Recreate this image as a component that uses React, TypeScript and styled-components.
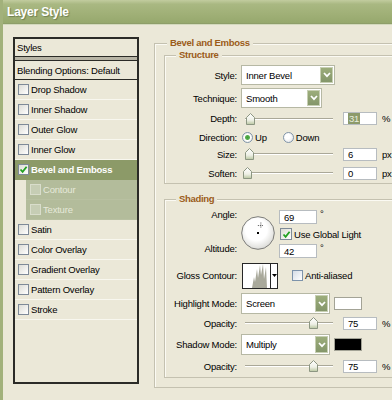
import React from 'react'
import styled, { createGlobalStyle } from 'styled-components'

const BG = '#ebe8d8'

const GlobalStyle = createGlobalStyle`
  html, body {
    margin: 0;
    padding: 0;
    background: ${BG};
  }
  body {
    font-family: 'Liberation Sans', Arial, sans-serif;
    font-size: 9.5px;
    letter-spacing: -0.2px;
    color: #000;
  }
`

type Effect = {
  label: string
  active?: boolean
  sub?: boolean
  checked?: boolean
}

const effects: Effect[] = [
  { label: 'Drop Shadow' },
  { label: 'Inner Shadow' },
  { label: 'Outer Glow' },
  { label: 'Inner Glow' },
  { label: 'Bevel and Emboss', active: true, checked: true },
  { label: 'Contour', sub: true },
  { label: 'Texture', sub: true },
  { label: 'Satin' },
  { label: 'Color Overlay' },
  { label: 'Gradient Overlay' },
  { label: 'Pattern Overlay' },
  { label: 'Stroke' }
]

function Chevron() {
  return (
    <svg width='8' height='6' viewBox='0 0 8 6'>
      <polyline points='1,1 4,4.2 7,1' fill='none' stroke='#fff' strokeWidth='1.7' />
    </svg>
  )
}

function CheckMark() {
  return (
    <svg width='9' height='9' viewBox='0 0 9 9'>
      <polyline points='1.5,4.5 3.6,6.8 7.6,1.8' fill='none' stroke='#21a121' strokeWidth='1.8' />
    </svg>
  )
}

function Select({ value, width }: { value: string; width: number }) {
  return (
    <SelectBox $w={width}>
      <span>{value}</span>
      <SelectButton>
        <Chevron />
      </SelectButton>
    </SelectBox>
  )
}

function Slider({ pos }: { pos: number }) {
  return (
    <SliderBox>
      <SliderTrack />
      <SliderThumb style={{ left: pos - 4 }}>
        <svg width='9' height='12' viewBox='0 0 9 12'>
          <defs>
            <linearGradient id='thumb' x1='0' y1='0' x2='0' y2='1'>
              <stop offset='0' stopColor='#ffffff' />
              <stop offset='0.6' stopColor='#eef0e6' />
              <stop offset='1' stopColor='#b9c7a0' />
            </linearGradient>
          </defs>
          <path d='M0.5 11.5 V4.5 L4.5 0.5 L8.5 4.5 V11.5 Z' fill='url(#thumb)' stroke='#8c9682' />
        </svg>
      </SliderThumb>
    </SliderBox>
  )
}

function Dial() {
  const cx = 17 + 8 * Math.cos((69 * Math.PI) / 180)
  const cy = 17 - 8 * Math.sin((69 * Math.PI) / 180)
  return (
    <DialBox>
      <svg width='34' height='34' viewBox='0 0 34 34'>
        <defs>
          <radialGradient id='dial' cx='0.45' cy='0.4' r='0.6'>
            <stop offset='0.55' stopColor='#ffffff' />
            <stop offset='1' stopColor='#dcdcd8' />
          </radialGradient>
        </defs>
        <circle cx='17' cy='17' r='16.3' fill='url(#dial)' stroke='#7b7b78' />
        <line x1={cx} y1={cy - 3} x2={cx} y2={cy + 3} stroke='#555' strokeDasharray='1 1' />
        <line x1={cx - 3} y1={cy} x2={cx + 3} y2={cy} stroke='#555' strokeDasharray='1 1' />
        <rect x='16' y='16' width='2' height='2' fill='#000' />
      </svg>
    </DialBox>
  )
}

export default function App() {
  return (
    <Window>
      <GlobalStyle />
      <TitleBar>Layer Style</TitleBar>
      <Body>
        <StylesPanel>
          <PanelHeader>Styles</PanelHeader>
          <PanelDivider />
          <BlendingRow>Blending Options: Default</BlendingRow>
          {effects.map(effect => (
            <EffectRow key={effect.label} $active={effect.active} $sub={effect.sub}>
              <Check $size={11} $muted={effect.sub}>
                {effect.checked && <CheckMark />}
              </Check>
              <span>{effect.label}</span>
            </EffectRow>
          ))}
        </StylesPanel>

        <Group>
          <Legend $outer>Bevel and Emboss</Legend>
          <SubGroup>
            <Legend>Structure</Legend>
            <Rows>
              <Row $h={20}>
                <Label>Style:</Label>
                <Gap $w={4} />
                <Select value='Inner Bevel' width={94} />
              </Row>
              <Row $h={20} $mt={3}>
                <Label>Technique:</Label>
                <Gap $w={4} />
                <Select value='Smooth' width={81} />
              </Row>
              <Row $h={21}>
                <Label>Depth:</Label>
                <Gap $w={8} />
                <Slider pos={5} />
                <Gap $w={10} />
                <NumberField $w={34}>
                  <Selected>31</Selected>
                </NumberField>
                <Unit>%</Unit>
              </Row>
              <Row $h={16}>
                <Label>Direction:</Label>
                <Gap $w={5} />
                <Radio $checked />
                <RadioText>Up</RadioText>
                <Gap $w={16} />
                <Radio />
                <RadioText>Down</RadioText>
              </Row>
              <Row $h={18}>
                <Label>Size:</Label>
                <Gap $w={8} />
                <Slider pos={4} />
                <Gap $w={10} />
                <NumberField $w={34}>6</NumberField>
                <Unit>px</Unit>
              </Row>
              <Row $h={20}>
                <Label>Soften:</Label>
                <Gap $w={8} />
                <Slider pos={2} />
                <Gap $w={10} />
                <NumberField $w={34}>0</NumberField>
                <Unit>px</Unit>
              </Row>
            </Rows>
          </SubGroup>

          <SubGroup $mt={9}>
            <Legend>Shading</Legend>
            <Rows $pt={3}>
              <AngleBlock>
                <AngleLabels>
                  <span>Angle:</span>
                  <span>Altitude:</span>
                </AngleLabels>
                <Gap $w={4} />
                <Dial />
                <Gap $w={4} />
                <AngleFields>
                  <FieldLine>
                    <NumberField $w={38} $h={14}>69</NumberField>
                    <Degree>°</Degree>
                  </FieldLine>
                  <FieldLine>
                    <Gap $w={1} />
                    <Check $size={12}>
                      <CheckMark />
                    </Check>
                    <CheckText>Use Global Light</CheckText>
                  </FieldLine>
                  <FieldLine>
                    <NumberField $w={38} $h={14}>42</NumberField>
                    <Degree>°</Degree>
                  </FieldLine>
                </AngleFields>
              </AngleBlock>

              <Row $h={27} $mt={4}>
                <Label>Gloss Contour:</Label>
                <Gap $w={5} />
                <ContourBox>
                  <svg width='26' height='24' viewBox='0 0 26 24'>
                    <path
                      d='M9 24 L11 13 L12 18 L14 5 L15 14 L17 1 L18 11 L20 0 L21 15 L23 3 L24 24 Z'
                      fill='#a9a99b'
                    />
                  </svg>
                  <ContourArrow>
                    <svg width='5' height='3' viewBox='0 0 5 3'>
                      <path d='M0 0 H5 L2.5 3 Z' fill='#000' />
                    </svg>
                  </ContourArrow>
                </ContourBox>
                <Gap $w={14} />
                <Check $size={11} $blue />
                <CheckText>Anti-aliased</CheckText>
              </Row>

              <Row $h={21} $mt={4}>
                <Label>Highlight Mode:</Label>
                <Gap $w={4} />
                <Select value='Screen' width={89} />
                <Gap $w={4} />
                <Swatch $color='#ffffff' />
              </Row>
              <Row $h={18}>
                <Label>Opacity:</Label>
                <Gap $w={8} />
                <Slider pos={68} />
                <Gap $w={10} />
                <NumberField $w={34}>75</NumberField>
                <Unit>%</Unit>
              </Row>
              <Row $h={21} $mt={2}>
                <Label>Shadow Mode:</Label>
                <Gap $w={4} />
                <Select value='Multiply' width={89} />
                <Gap $w={4} />
                <Swatch $color='#000000' />
              </Row>
              <Row $h={22}>
                <Label>Opacity:</Label>
                <Gap $w={8} />
                <Slider pos={68} />
                <Gap $w={10} />
                <NumberField $w={34}>75</NumberField>
                <Unit>%</Unit>
              </Row>
            </Rows>
          </SubGroup>
        </Group>
      </Body>
    </Window>
  )
}

const {
  Window,
  TitleBar,
  Body,
  StylesPanel,
  PanelHeader,
  PanelDivider,
  BlendingRow,
  EffectRow,
  Check,
  Group,
  SubGroup,
  Legend,
  Rows,
  Row,
  Label,
  Gap,
  SelectBox,
  SelectButton,
  SliderBox,
  SliderTrack,
  SliderThumb,
  NumberField,
  Selected,
  Unit,
  Radio,
  RadioText,
  AngleBlock,
  AngleLabels,
  AngleFields,
  FieldLine,
  Degree,
  DialBox,
  CheckText,
  ContourBox,
  ContourArrow,
  Swatch
} = {
  Window: styled.div`
    width: 392px;
    height: 400px;
    overflow: hidden;
    display: flex;
    flex-direction: column;
    background: ${BG};
    border-left: 3px solid #a2b17b;
    box-sizing: border-box;
  `,
  TitleBar: styled.div`
    height: 24px;
    flex-shrink: 0;
    display: flex;
    align-items: center;
    padding-left: 4px;
    padding-top: 1px;
    box-sizing: border-box;
    background: linear-gradient(#c2cc9f 0%, #a9b882 18%, #a0b077 60%, #96a86d 100%);
    border-bottom: 1px solid #8e9e69;
    box-shadow: 0 1px 0 #d3d9bd;
    color: #fff;
    font-size: 12px;
    font-weight: 700;
    letter-spacing: -0.2px;
    text-shadow: 1px 1px 1px #6f7f4f;
  `,
  Body: styled.div`
    flex: 1;
    display: flex;
    align-items: flex-start;
    padding: 13px 0 0 10px;
  `,
  StylesPanel: styled.div`
    width: 126px;
    height: 347px;
    flex-shrink: 0;
    box-sizing: border-box;
    border: 2px solid #2b2b27;
    display: flex;
    flex-direction: column;
  `,
  PanelHeader: styled.div`
    height: 17px;
    display: flex;
    align-items: center;
    padding-left: 2px;
  `,
  PanelDivider: styled.div`
    height: 3px;
    background: #b7b4a5;
    border-top: 1px solid #2b2b27;
    border-bottom: 1px solid #2b2b27;
  `,
  BlendingRow: styled.div`
    height: 18px;
    display: flex;
    align-items: center;
    padding-left: 2px;
    border-bottom: 1px solid #2b2b27;
  `,
  EffectRow: styled.div<{ $active?: boolean; $sub?: boolean }>`
    height: 19px;
    display: flex;
    align-items: center;
    gap: 2px;
    padding-left: ${({ $sub }) => ($sub ? 4 : 3)}px;
    margin-left: ${({ $sub }) => ($sub ? 11 : 0)}px;
    background: ${({ $active, $sub }) => ($active ? '#8c9a68' : $sub ? '#b3bc9b' : 'transparent')};
    color: ${({ $active, $sub }) => ($active ? '#fff' : $sub ? '#e6e9da' : '#000')};
    font-weight: ${({ $active }) => ($active ? 700 : 400)};
    border-bottom: 1px solid ${({ $active, $sub }) => ($active ? '#8c9a68' : $sub ? '#b8c0a1' : '#f8f7ef')};
  `,
  Check: styled.span<{ $size: number; $muted?: boolean; $blue?: boolean }>`
    width: ${({ $size }) => $size}px;
    height: ${({ $size }) => $size}px;
    box-sizing: border-box;
    flex-shrink: 0;
    display: flex;
    align-items: center;
    justify-content: center;
    border: 1px solid ${({ $muted, $blue }) => ($muted ? '#d9ddcb' : $blue ? '#7d93ab' : '#7e8a98')};
    background: ${({ $muted, $blue }) =>
      $muted
        ? 'rgba(255,255,255,0.25)'
        : $blue
        ? 'linear-gradient(135deg, #d5dde6, #ffffff)'
        : 'linear-gradient(135deg, #dcdcd5, #ffffff)'};
  `,
  Group: styled.fieldset`
    margin: 0 -40px 0 15px;
    padding: 0 0 9px 9px;
    flex: 1;
    min-width: 0;
    border: 1px solid #c4c1b0;
    box-shadow: inset 1px 1px 0 #fbfaf3;
  `,
  SubGroup: styled.fieldset<{ $mt?: number }>`
    margin: ${({ $mt }) => $mt || 0}px 0 0 0;
    padding: 0;
    min-width: 0;
    border: 1px solid #c4c1b0;
    box-shadow: inset 1px 1px 0 #fbfaf3;
  `,
  Legend: styled.legend<{ $outer?: boolean }>`
    margin-left: ${({ $outer }) => ($outer ? 3 : 11)}px;
    padding: 0 3px;
    background: ${BG};
    color: #9b5c1a;
    font-weight: 700;
    font-size: 9.5px;
    letter-spacing: -0.3px;
    line-height: 12px;
  `,
  Rows: styled.div<{ $pt?: number }>`
    display: flex;
    flex-direction: column;
    padding-top: ${({ $pt }) => ($pt === undefined ? 4 : $pt)}px;
  `,
  Row: styled.div<{ $h: number; $mt?: number }>`
    height: ${({ $h }) => $h}px;
    margin-top: ${({ $mt }) => $mt || 0}px;
    display: flex;
    align-items: center;
  `,
  Label: styled.span`
    width: 72px;
    flex-shrink: 0;
    text-align: right;
    white-space: nowrap;
  `,
  Gap: styled.span<{ $w: number }>`
    width: ${({ $w }) => $w}px;
    flex-shrink: 0;
  `,
  SelectBox: styled.div<{ $w: number }>`
    width: ${({ $w }) => $w}px;
    height: 100%;
    box-sizing: border-box;
    flex-shrink: 0;
    display: flex;
    align-items: center;
    justify-content: space-between;
    padding: 0 1px 0 4px;
    background: #fff;
    border: 1px solid #b6b8a4;
  `,
  SelectButton: styled.span`
    width: 13px;
    height: calc(100% - 2px);
    box-sizing: border-box;
    display: flex;
    align-items: center;
    justify-content: center;
    background: linear-gradient(#9cad7b, #84966a);
    border: 1px solid #c7cfb3;
  `,
  SliderBox: styled.div`
    position: relative;
    width: 88px;
    height: 12px;
    flex-shrink: 0;
  `,
  SliderTrack: styled.div`
    position: absolute;
    left: 0;
    right: 0;
    top: 5px;
    height: 0;
    border-top: 1px solid #aaa898;
    border-bottom: 1px solid #ffffff;
  `,
  SliderThumb: styled.div`
    position: absolute;
    top: 0;
    width: 9px;
    height: 12px;
    display: flex;
  `,
  NumberField: styled.div<{ $w: number; $h?: number }>`
    width: ${({ $w }) => $w}px;
    height: ${({ $h }) => $h || 13}px;
    box-sizing: border-box;
    flex-shrink: 0;
    display: flex;
    align-items: center;
    padding-left: 4px;
    background: #fff;
    border: 1px solid #b7bcc0;
  `,
  Selected: styled.span`
    background: #8c9a6a;
    color: #e8eedf;
    padding: 0 1px;
    line-height: 11px;
  `,
  Unit: styled.span`
    margin-left: 5px;
  `,
  Radio: styled.span<{ $checked?: boolean }>`
    width: 11px;
    height: 11px;
    box-sizing: border-box;
    flex-shrink: 0;
    border-radius: 50%;
    border: 1px solid #8094a9;
    background: ${({ $checked }) =>
      $checked
        ? 'radial-gradient(circle, #3f9a3a 0, #57b04e 2px, #ffffff 3px, #dddcd4 100%)'
        : 'radial-gradient(circle at 40% 40%, #ffffff 30%, #d9dcdf 100%)'};
  `,
  RadioText: styled.span`
    margin-left: 2px;
  `,
  AngleBlock: styled.div`
    height: 50px;
    display: flex;
  `,
  AngleLabels: styled.div`
    width: 72px;
    flex-shrink: 0;
    display: flex;
    flex-direction: column;
    justify-content: space-between;
    align-items: flex-end;
    padding-bottom: 2px;
    box-sizing: border-box;
    line-height: 14px;
  `,
  DialBox: styled.div`
    width: 34px;
    height: 34px;
    align-self: center;
    flex-shrink: 0;
    display: flex;
  `,
  AngleFields: styled.div`
    display: flex;
    flex-direction: column;
    gap: 4px;
    padding-top: 2px;
  `,
  FieldLine: styled.div`
    display: flex;
    align-items: center;
    min-height: 12px;
  `,
  Degree: styled.span`
    align-self: flex-start;
    margin-left: 3px;
    line-height: 8px;
  `,
  CheckText: styled.span`
    margin-left: 2px;
  `,
  ContourBox: styled.div`
    width: 36px;
    height: 26px;
    box-sizing: border-box;
    flex-shrink: 0;
    display: flex;
    align-items: flex-end;
    background: #fff;
    border: 1px solid #262626;
  `,
  ContourArrow: styled.span`
    width: 7px;
    height: 100%;
    box-sizing: border-box;
    margin-left: 1px;
    border-left: 1px solid #262626;
    display: flex;
    align-items: center;
    justify-content: center;
  `,
  Swatch: styled.span<{ $color: string }>`
    width: 28px;
    height: 13px;
    box-sizing: border-box;
    flex-shrink: 0;
    background: ${({ $color }) => $color};
    border: 1px solid #a3a396;
  `
}
